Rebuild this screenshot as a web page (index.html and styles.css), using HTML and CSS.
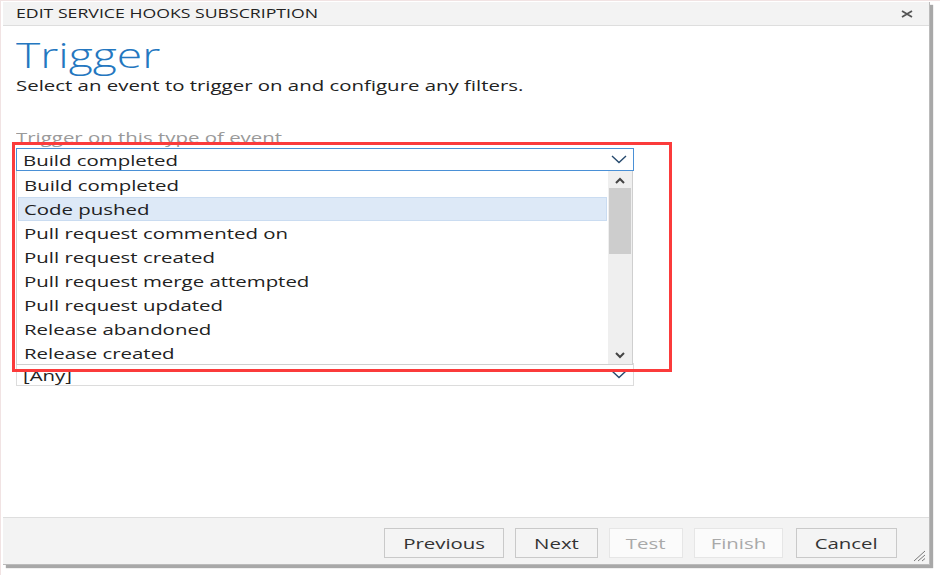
FILE: index.html
```html
<!DOCTYPE html>
<html>
<head>
<meta charset="utf-8">
<link rel="stylesheet" href="styles.css">
</head>
<body>
<div class="frame">
  <div class="dialog">
    <div class="titlebar">
      <span class="title t">EDIT SERVICE HOOKS SUBSCRIPTION</span>
      <svg class="close" width="12" height="8" viewBox="0 0 12 8"><path d="M1 1 L11 7 M11 1 L1 7" stroke="#555" stroke-width="1.8" fill="none"/></svg>
    </div>
    <div class="content">
      <h1 class="heading"><span class="t">Trigger</span></h1>
      <p class="subtitle"><span class="t">Select an event to trigger on and configure any filters.</span></p>
      <div class="field">
        <div class="label"><span class="t">Trigger on this type of event</span></div>
        <div class="select focused">
          <span class="t">Build completed</span>
          <svg class="chev" width="16" height="9" viewBox="0 0 16 9"><path d="M1 1 L8 7.5 L15 1" stroke="#264a6e" stroke-width="1.4" fill="none"/></svg>
        </div>
        <div class="dropdown">
          <ul class="options">
            <li><span class="t">Build completed</span></li>
            <li class="hover"><span class="t">Code pushed</span></li>
            <li><span class="t">Pull request commented on</span></li>
            <li><span class="t">Pull request created</span></li>
            <li><span class="t">Pull request merge attempted</span></li>
            <li><span class="t">Pull request updated</span></li>
            <li><span class="t">Release abandoned</span></li>
            <li><span class="t">Release created</span></li>
          </ul>
          <div class="scrollbar">
            <svg class="arrow" width="12" height="8" viewBox="0 0 12 8"><path d="M2 6 L6 2 L10 6" stroke="#444" stroke-width="2" fill="none"/></svg>
            <div class="track"><div class="thumb"></div></div>
            <svg class="arrow" width="12" height="8" viewBox="0 0 12 8"><path d="M2 2 L6 6 L10 2" stroke="#444" stroke-width="2" fill="none"/></svg>
          </div>
        </div>
        <div class="annotation"></div>
      </div>
      <div class="field second">
        <div class="select">
          <span class="t">[Any]</span>
          <svg class="chev" width="16" height="9" viewBox="0 0 16 9"><path d="M1 1 L8 7.5 L15 1" stroke="#264a6e" stroke-width="1.4" fill="none"/></svg>
        </div>
      </div>
    </div>
    <div class="footer">
      <button class="btn prev"><span class="t c">Previous</span></button>
      <button class="btn next"><span class="t c">Next</span></button>
      <button class="btn test" disabled><span class="t c">Test</span></button>
      <button class="btn finish" disabled><span class="t c">Finish</span></button>
      <button class="btn cancel"><span class="t c">Cancel</span></button>
      <svg class="grip" width="14" height="12" viewBox="0 0 14 12"><path d="M13 1 L2 11 M13 5 L6 11 M13 8.5 L10 11" stroke="#777" stroke-width="1" fill="none"/></svg>
    </div>
  </div>
</div>
</body>
</html>
```

FILE: styles.css
```css
* { box-sizing: border-box; }
html, body { margin: 0; padding: 0; background: #fff; }
body {
  width: 940px;
  height: 575px;
  font-family: "Open Sans", "Liberation Sans", sans-serif;
  color: #222;
  overflow: hidden;
}
/* the screenshot is stretched horizontally; text glyphs follow that stretch */
.t {
  display: inline-block;
  transform: scaleX(1.36);
  transform-origin: 0 50%;
  white-space: nowrap;
}
.t.c { transform-origin: 50% 50%; }
.frame {
  height: 575px;
  padding: 1px 0 0 2px;
  border-left: 1px solid #f1e3e3;
  border-top: 1px solid #f1e3e3;
}
.dialog {
  width: 927px;
  height: 563px;
  display: flex;
  flex-direction: column;
  background: #fff;
  border-right: 1px solid #bbb;
  border-bottom: 1px solid #bbb;
  box-shadow: 3px 3px 1px #a8a8a8;
}
.titlebar {
  height: 24px;
  background: #f3f3f3;
  border-bottom: 1px solid #dedede;
  display: flex;
  align-items: center;
  justify-content: space-between;
  padding: 0 16px 0 13px;
}
.title {
  font-size: 13px;
  line-height: 20px;
  color: #222;
  margin-top: -1px;
}
.close { display: block; }
.content {
  flex: 1;
  padding: 9px 0 0 13px;
}
.heading {
  margin: 0;
  font-size: 34px;
  line-height: 40px;
  font-weight: 300;
  color: #2477c0;
}
.subtitle {
  margin: 0;
  font-size: 15px;
  line-height: 20px;
  color: #222;
}
.field {
  position: relative;
  width: 618px;
  margin-top: 33px;
}
.label {
  font-size: 15px;
  line-height: 18px;
  color: #9a9a9a;
  margin-bottom: 2px;
}
.select {
  height: 23px;
  border: 1px solid #dcdcdc;
  display: flex;
  align-items: center;
  justify-content: space-between;
  padding: 0 6px 0 6px;
  font-size: 15px;
  background: #fff;
}
.select.focused { border-color: #4a90d6; }
.chev { display: block; }
.field.second { margin-top: 192px; }
.dropdown {
  position: absolute;
  top: 43px;
  left: 0;
  width: 617px;
  height: 194px;
  background: #fff;
  border: 1px solid #cfcfcf;
  border-top: none;
  display: flex;
  overflow: hidden;
  z-index: 2;
}
.options {
  list-style: none;
  margin: 0;
  padding: 2px 1px 0 1px;
  flex: 1;
}
.options li {
  height: 24px;
  line-height: 23px;
  padding: 0 5px;
  border: 1px solid transparent;
  font-size: 15px;
  color: #222;
}
.options li.hover {
  background: #dde9f7;
  border-color: #cadcf1;
}
.scrollbar {
  width: 24px;
  background: #efefef;
  display: flex;
  flex-direction: column;
  align-items: center;
}
.scrollbar .arrow { display: block; margin: 6px 0 3px; }
.scrollbar .arrow:last-child { margin: 3px 0 5px; }
.track { flex: 1; width: 100%; }
.thumb { width: 22px; margin: 0 auto; height: 66px; background: #cdcdcd; }
.annotation {
  position: absolute;
  left: -4px;
  top: 14px;
  width: 660px;
  height: 230px;
  border: 3px solid #fb3b3b;
  z-index: 3;
  pointer-events: none;
}
.footer {
  height: 47px;
  background: #f3f3f3;
  border-top: 1px solid #dedede;
  display: flex;
  justify-content: flex-end;
  align-items: flex-start;
  padding: 10px 32px 0 0;
  gap: 11px;
  position: relative;
}
.btn {
  height: 30px;
  font-family: "Open Sans", "Liberation Sans", sans-serif;
  font-size: 15px;
  color: #333;
  background: #f4f4f4;
  border: 1px solid #c9c9c9;
  padding: 0;
}
.btn:disabled {
  background: #fbfbfb;
  border-color: #e6e6e6;
  color: #a9a9a9;
}
.prev { width: 120px; }
.next { width: 83px; }
.test { width: 74px; }
.finish { width: 89px; }
.cancel { width: 101px; margin-left: 2px; }
.grip {
  position: absolute;
  right: 3px;
  bottom: 2px;
}
```
